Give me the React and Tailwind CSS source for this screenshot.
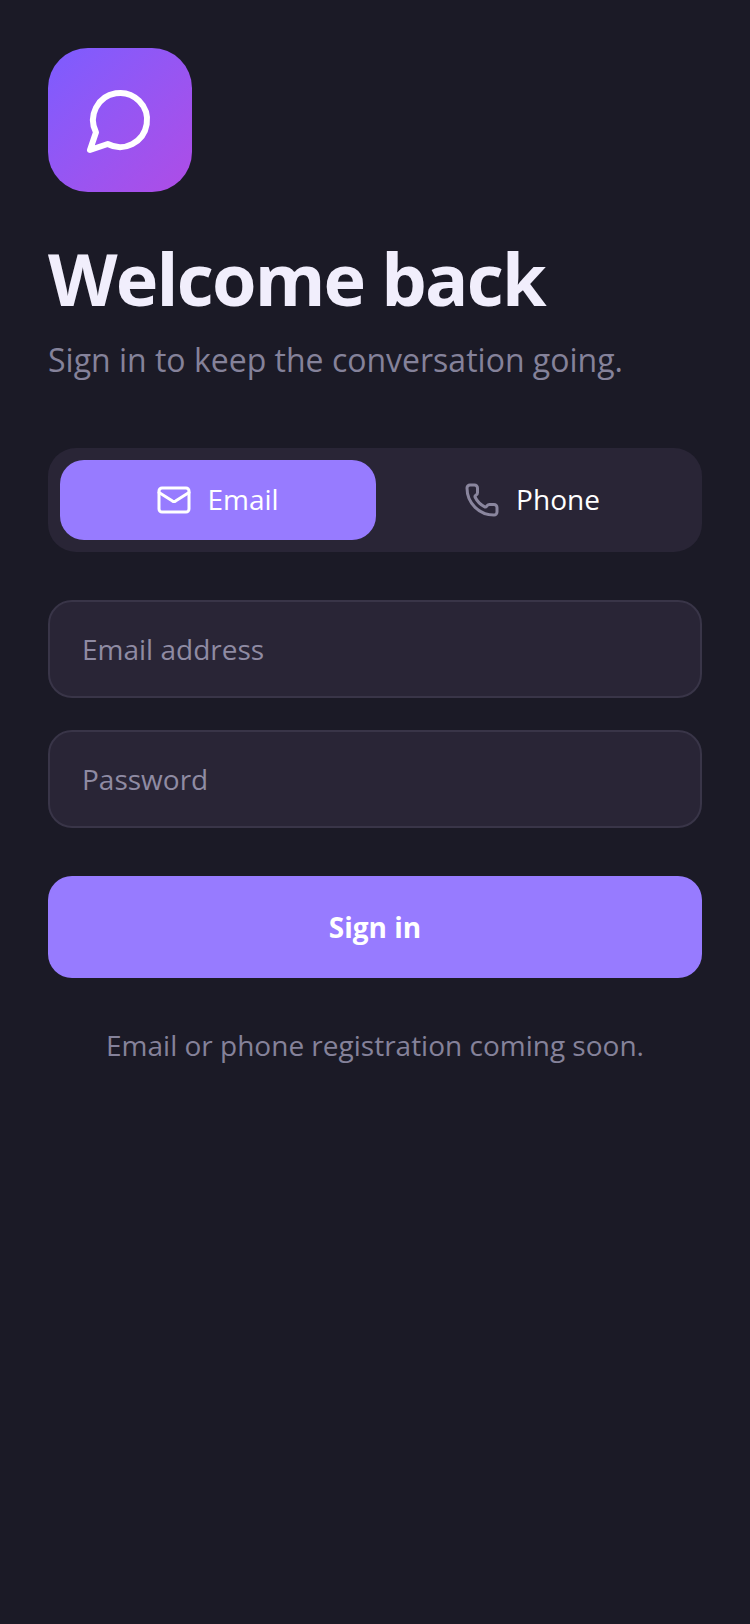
export default function App() {
  return (
    <div className="min-h-[1624px] bg-[#1b1a26] px-12 pt-12 text-white" style={{ fontFamily: '"Open Sans", sans-serif' }}>
      <div className="flex h-36 w-36 items-center justify-center rounded-[40px] bg-gradient-to-br from-[#7c5cff] to-[#ae4ce6]">
        <svg width="72" height="72" viewBox="0 0 24 24" fill="none" stroke="white" strokeWidth="2" strokeLinecap="round" strokeLinejoin="round">
          <path d="M7.9 20A9 9 0 1 0 4 16.1L2 22Z" />
        </svg>
      </div>
      <h1 className="mt-10 text-[72px] leading-[92px] font-bold tracking-[-1.8px] text-[#f1eefc]">Welcome back</h1>
      <p className="mt-3 text-[32px] leading-[48px] text-[#85829a]">Sign in to keep the conversation going.</p>
      <div className="mt-16 flex rounded-[28px] bg-[#292536] p-3">
        <div className="flex h-20 w-[316px] items-center justify-center gap-[15px] rounded-[24px] bg-[#977bff] pr-px">
          <svg width="36" height="36" viewBox="0 0 24 24" fill="none" stroke="white" strokeWidth="2" strokeLinecap="round" strokeLinejoin="round">
            <rect x="2" y="4" width="20" height="16" rx="2" />
            <path d="m22 7-8.991 5.727a2 2 0 0 1-2.009 0L2 7" />
          </svg>
          <span className="mb-0.5 text-[28px] leading-10">Email</span>
        </div>
        <div className="flex h-20 flex-1 items-center justify-center gap-4 rounded-[24px] pr-0.5">
          <svg width="36" height="36" viewBox="0 0 24 24" fill="none" stroke="#8a869e" strokeWidth="2" strokeLinecap="round" strokeLinejoin="round">
            <path d="M13.832 16.568a1 1 0 0 0 1.213-.303l.355-.465A2 2 0 0 1 17 15h3a2 2 0 0 1 2 2v3a2 2 0 0 1-2 2A18 18 0 0 1 2 4a2 2 0 0 1 2-2h3a2 2 0 0 1 2 2v3a2 2 0 0 1-.8 1.6l-.468.351a1 1 0 0 0-.292 1.233 14 14 0 0 0 6.392 6.384" />
          </svg>
          <span className="mb-0.5 text-[28px] leading-10">Phone</span>
        </div>
      </div>
      <div className="mt-12 flex h-[98px] items-center rounded-[24px] border-2 border-[#393548] bg-[#292536] px-8 text-[28px] text-[#8f8ba3]">Email address</div>
      <div className="mt-8 flex h-[98px] items-center rounded-[24px] border-2 border-[#393548] bg-[#292536] px-8 text-[28px] text-[#8f8ba3]">Password</div>
      <div className="mt-12 flex h-[102px] items-center justify-center rounded-[24px] bg-[#977bff] text-[28px] font-bold">Sign in</div>
      <p className="mt-[47px] text-center text-[28px] leading-10 text-[#85829a]">Email or phone registration coming soon.</p>
    </div>
  );
}
